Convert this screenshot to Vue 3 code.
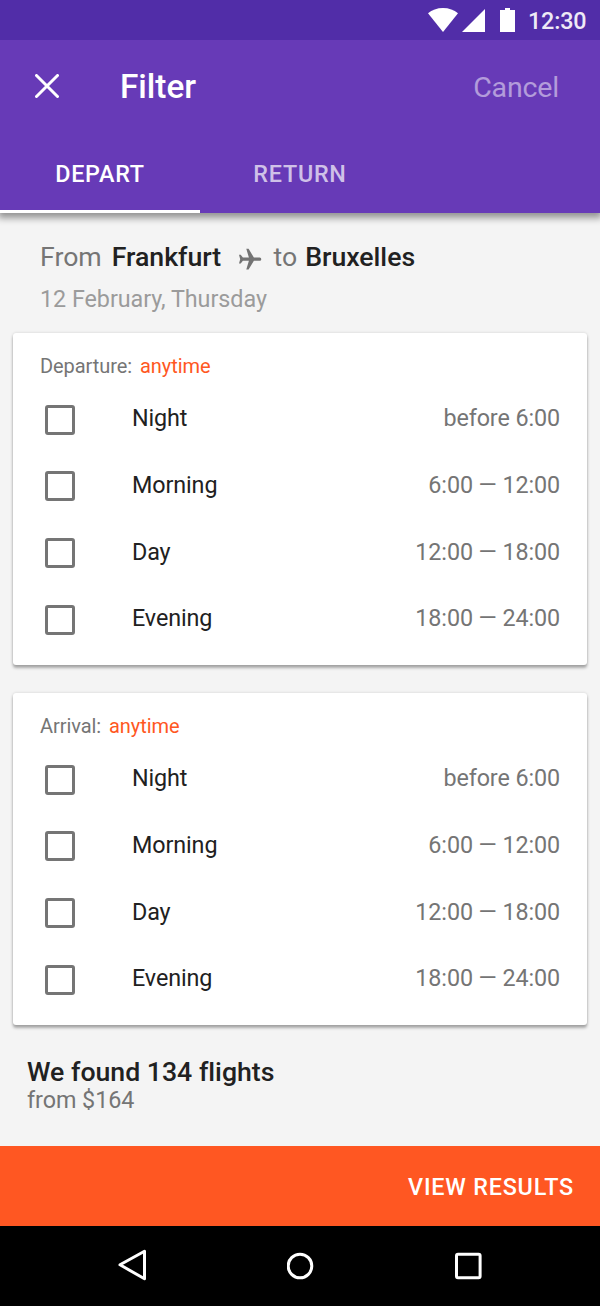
<script setup>
const slots = [
  { name: 'Night', time: 'before 6:00' },
  { name: 'Morning', time: '6:00 — 12:00' },
  { name: 'Day', time: '12:00 — 18:00' },
  { name: 'Evening', time: '18:00 — 24:00' },
]
const groups = ['Departure', 'Arrival']
</script>

<template>
  <div class="screen">
    <div class="status">
      <svg class="wifi" width="30" height="24" viewBox="0 0 30 24"><path d="M0 5.300C4 2 9 0 15 0s11 2 15 5.300L15 24z" fill="#fff" /></svg>
      <svg class="signal" width="23" height="23" viewBox="0 0 23 23"><path d="M23 0v23H0z" fill="#fff" /></svg>
      <svg class="battery" width="15" height="24" viewBox="0 0 15 24"><path d="M5 0h5v2h5v22H0V2h5z" fill="#fff" /></svg>
      <span class="clock">12:30</span>
    </div>
    <header class="header">
      <div class="bar">
        <svg class="close" width="24" height="24" viewBox="0 0 24 24"><path d="M1.500 1.500l21 21M22.500 1.500l-21 21" stroke="#fff" stroke-width="3" stroke-linecap="round" /></svg>
        <span class="title">Filter</span>
        <span class="cancel">Cancel</span>
      </div>
      <nav class="tabs">
        <span class="tab active">DEPART</span>
        <span class="tab">RETURN</span>
      </nav>
    </header>
    <section class="route">
      <div class="cities">
        <span class="from">From</span><b class="origin">Frankfurt</b>
        <svg class="plane" width="24" height="24" viewBox="0 0 24 24"><path d="M1 7.800h1.700L4.900 10.600h6L8.300 1.800h2.300l5.300 8.800h5.800a1.600 1.600 0 0 1 0 3.200h-5.800l-5.300 8.800H8.300l2.600-8.800h-6l-2.200 2.800H1l1.200-4.400z" fill="#737373" /></svg>
        <span class="to">to</span><b>Bruxelles</b>
      </div>
      <div class="date">12 February, Thursday</div>
    </section>
    <section v-for="g in groups" :key="g" class="card">
      <div class="label">{{ g }}:<span class="any">anytime</span></div>
      <div v-for="s in slots" :key="s.name" class="row">
        <span class="box"></span>
        <span class="name">{{ s.name }}</span>
        <span class="time">{{ s.time }}</span>
      </div>
    </section>
    <section class="found">
      <div class="count">We found 134 flights</div>
      <div class="price">from $164</div>
    </section>
    <div class="action">VIEW RESULTS</div>
    <div class="nav">
      <svg width="30" height="34" viewBox="0 0 30 34"><path d="M26.500 2.900v27.600L2 16.500z" transform="translate(0 -.7)" fill="none" stroke="#fff" stroke-width="3" stroke-linejoin="round" /></svg>
      <svg width="28" height="28" viewBox="0 0 28 28"><circle cx="13" cy="14" r="11.800" fill="none" stroke="#fff" stroke-width="3" /></svg>
      <svg width="28" height="28" viewBox="0 0 28 28"><rect x="2.500" y="2.200" width="23.600" height="23.600" rx="1.500" fill="none" stroke="#fff" stroke-width="3" /></svg>
    </div>
  </div>
</template>

<style>
body { margin: 0; }
</style>

<style scoped>
.screen {
  width: 600px;
  height: 1306px;
  overflow: hidden;
  display: flex;
  flex-direction: column;
  background: #f4f4f4;
  font-family: Roboto, sans-serif;
  font-size: 23.33px;
  color: #212121;
}
svg { display: block; flex: none; }
b { font-weight: 500; letter-spacing: -0.03px; }
.status {
  position: relative;
  z-index: 1;
  flex: none;
  height: 40px;
  display: flex;
  align-items: center;
  background: #512da8;
  padding-left: 428px;
}
.signal { margin-left: 4px; }
.battery { margin-left: 15px; }
.clock { margin: 1px 0 0 13px; color: #eeeaf6; font-weight: 500; letter-spacing: -0.15px; }
.header {
  flex: none;
  height: 173px;
  background: #673ab7;
  color: #fff;
  box-shadow: 0 3px 7px 2px rgba(0, 0, 0, 0.4);
  display: flex;
  flex-direction: column;
}
.bar {
  height: 94px;
  display: flex;
  align-items: center;
  padding: 0 41px 0 35px;
}
.close { margin-top: 1px; }
.title { margin: 2px 0 0 61px; font-size: 33.33px; font-weight: 500; }
.cancel { margin: 2px 0 0 auto; padding-top: 2px; font-size: 28.5px; letter-spacing: -0.15px; color: rgba(255, 255, 255, 0.5); }
.tabs { flex: 1; display: flex; }
.tab {
  width: 200px;
  box-sizing: border-box;
  padding-top: 7px;
  border-bottom: 3px solid transparent;
  text-align: center;
  line-height: 72px;
  font-weight: 500;
  letter-spacing: 0.75px;
  color: rgba(255, 255, 255, 0.7);
}
.tab.active { color: #fff; border-color: #fff; }
.route { flex: none; height: 120.33px; padding: 24px 40px 0; box-sizing: border-box; }
.cities { display: flex; height: 40px; line-height: 41px; font-size: 26.67px; }
.from, .to { color: #757575; }
.origin { margin-left: 10px; }
.plane { margin: 10px 12px 0 16.500px; }
.to { margin-right: 8px; }
.date { color: #9b9b9b; line-height: 44px; letter-spacing: -0.04px; }
.card {
  flex: none;
  height: 332px;
  box-sizing: border-box;
  margin: 0 13.330px 28px;
  padding: 18.500px 26.670px 0;
  background: #fff;
  border-radius: 3px;
  box-shadow: 0 3px 3px rgba(0, 0, 0, 0.3), 0 0 3px rgba(0, 0, 0, 0.15);
}
.label { font-size: 20px; height: 33.200px; line-height: 29px; color: #757575; letter-spacing: -0.07px; }
.any { margin-left: 8px; color: #ff5722; }
.row { display: flex; align-items: center; height: 66.600px; letter-spacing: -0.1px; }
.box {
  width: 30px;
  height: 30px;
  box-sizing: border-box;
  border: 3px solid #757575;
  border-radius: 3px;
  margin: 3px 57px 0 5px;
}
.time { margin-left: auto; color: #757575; }
.found { flex: none; height: 92.500px; padding: 5px 27px 0; box-sizing: border-box; }
.count { font-size: 26.67px; font-weight: 500; line-height: 28px; font-variant-ligatures: none; }
.price { color: #757575; line-height: 28px; letter-spacing: -0.05px; }
.action {
  flex: none;
  height: 80px;
  background: #ff5722;
  color: #fff;
  font-weight: 500;
  letter-spacing: 0.8px;
  line-height: 82px;
  text-align: right;
  padding-right: 26px;
}
.nav {
  flex: none;
  height: 80px;
  background: #000;
  display: flex;
  align-items: center;
  justify-content: space-between;
  padding: 0 118px;
}
</style>
